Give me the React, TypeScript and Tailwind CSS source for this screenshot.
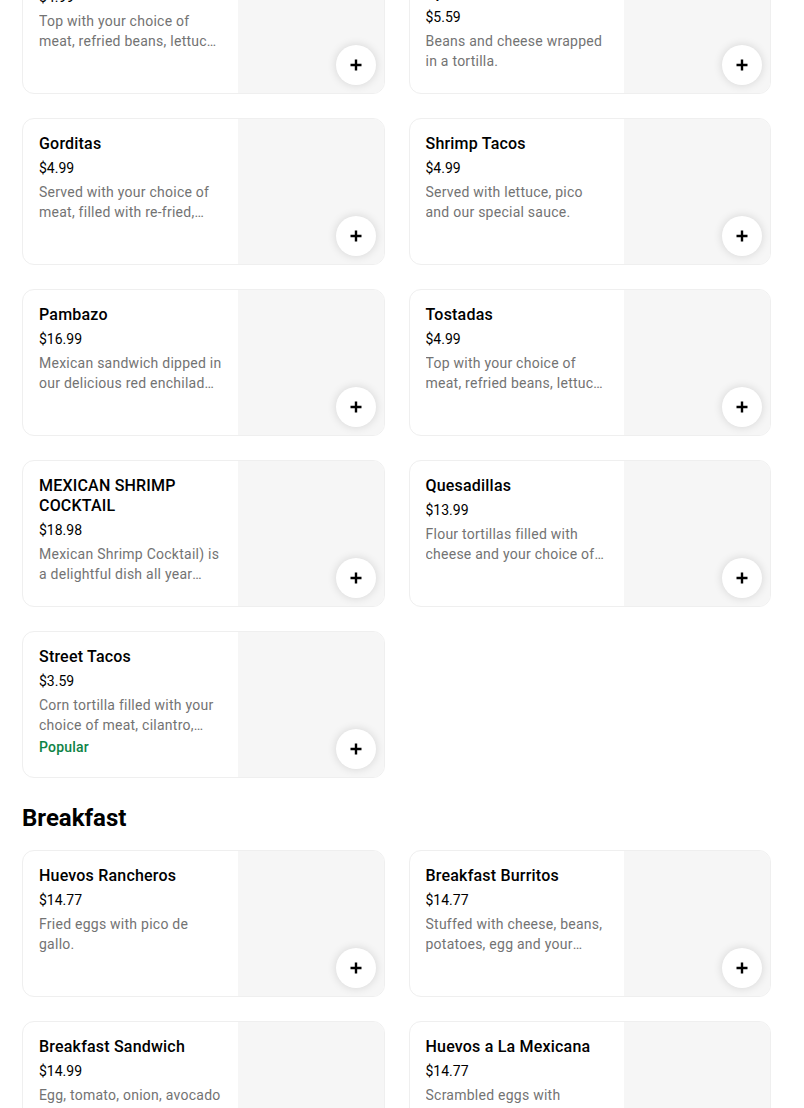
import React from 'react'

interface MenuItem {
  name: string
  price: string
  description: string
  popular?: boolean
}

const tacoItems: MenuItem[] = [
  {
    name: 'Sopes',
    price: '$4.99',
    description: 'Top with your choice of meat, refried beans, lettuce, cheese and sour cream.',
  },
  {
    name: 'Bean and Cheese Burrito Special',
    price: '$5.59',
    description: 'Beans and cheese wrapped in a tortilla.',
  },
  {
    name: 'Gorditas',
    price: '$4.99',
    description: 'Served with your choice of meat, filled with re-fried, lettuce and cheese.',
  },
  {
    name: 'Shrimp Tacos',
    price: '$4.99',
    description: 'Served with lettuce, pico and our special sauce.',
  },
  {
    name: 'Pambazo',
    price: '$16.99',
    description: 'Mexican sandwich dipped in our delicious red enchilada sauce.',
  },
  {
    name: 'Tostadas',
    price: '$4.99',
    description: 'Top with your choice of meat, refried beans, lettuce, cheese and sour cream.',
  },
  {
    name: 'MEXICAN SHRIMP COCKTAIL',
    price: '$18.98',
    description: 'Mexican Shrimp Cocktail) is a delightful dish all year round.',
  },
  {
    name: 'Quesadillas',
    price: '$13.99',
    description: 'Flour tortillas filled with cheese and your choice of meat.',
  },
  {
    name: 'Street Tacos',
    price: '$3.59',
    description: 'Corn tortilla filled with your choice of meat, cilantro, onion and salsa.',
    popular: true,
  },
]

const breakfastItems: MenuItem[] = [
  { name: 'Huevos Rancheros', price: '$14.77', description: 'Fried eggs with pico de gallo.' },
  {
    name: 'Breakfast Burritos',
    price: '$14.77',
    description: 'Stuffed with cheese, beans, potatoes, egg and your choice of meat.',
  },
  {
    name: 'Breakfast Sandwich',
    price: '$14.99',
    description: 'Egg, tomato, onion, avocado and cheese.',
  },
  {
    name: 'Huevos a La Mexicana',
    price: '$14.77',
    description: 'Scrambled eggs with tomato, onion and jalapeño.',
  },
]

function PlusIcon() {
  return (
    <svg width="14" height="14" viewBox="0 0 14 14" fill="none">
      <path d="M7 1.5v11M1.5 7h11" stroke="#000" strokeWidth="2.4" />
    </svg>
  )
}

function MenuCard({ item }: { item: MenuItem }) {
  return (
    <div className="flex h-[147px] overflow-hidden rounded-xl border border-[#efefef] bg-white">
      <div className="min-w-0 flex-1 px-4 pt-[15px]">
        <h3 className="text-[16px] font-medium leading-5 tracking-[0.2px] text-black">{item.name}</h3>
        <p className="mt-1 text-[14px] leading-5 text-black">{item.price}</p>
        <p className="mt-1 line-clamp-2 text-[14px] leading-5 tracking-[0.25px] text-[#737373]">
          {item.description}
        </p>
        {item.popular && (
          <p className="mt-0.5 text-[14px] font-medium leading-5 tracking-[0.2px] text-[#0e8345]">Popular</p>
        )}
      </div>
      <div className="relative w-[146px] shrink-0 bg-[#f6f6f6]">
        <button className="absolute bottom-2 right-2 flex h-10 w-10 items-center justify-center rounded-full bg-white shadow-[0_0_10px_rgba(0,0,0,0.14)]">
          <PlusIcon />
        </button>
      </div>
    </div>
  )
}

export default function App() {
  return (
    <div className="h-[1108px] overflow-hidden bg-white font-['Roboto','Liberation_Sans',sans-serif]">
      <div className="ml-[22px] mt-[-53px] w-[749px]">
        <div className="grid grid-cols-2 gap-6">
          {tacoItems.map((item) => (
            <MenuCard key={item.name} item={item} />
          ))}
        </div>

        <h2 className="mb-4 mt-6 text-[24px] font-bold leading-8 text-black">Breakfast</h2>
        <div className="grid grid-cols-2 gap-6">
          {breakfastItems.map((item) => (
            <MenuCard key={item.name} item={item} />
          ))}
        </div>
      </div>
    </div>
  )
}
